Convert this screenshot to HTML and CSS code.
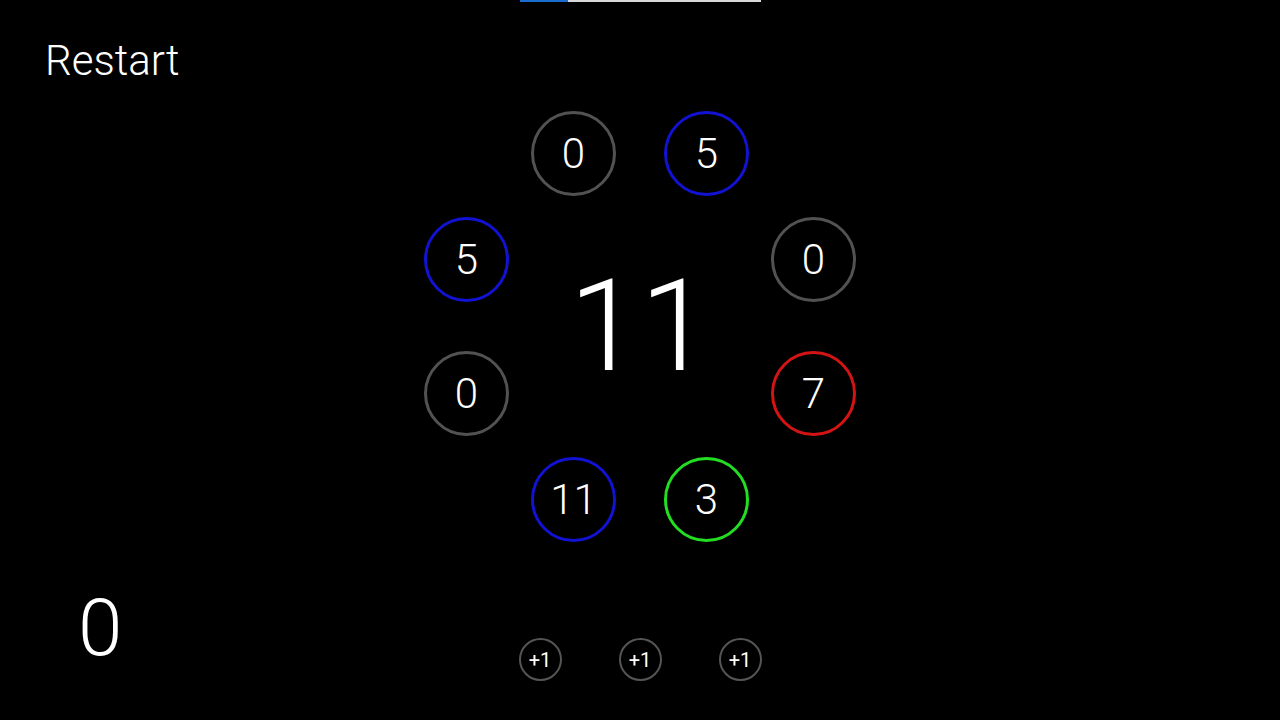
FILE: index.html
```html
<!DOCTYPE html>
<html lang="en">
<head>
<meta charset="utf-8">
<title>Counter ring</title>
<link rel="stylesheet" href="styles.css">
</head>
<body>
<div class="app">
  <header class="top">
    <div class="progress"><div class="progress-fill" style="width: 20%"></div></div>
    <div class="restart">Restart</div>
  </header>
  <main class="board">
    <div class="node n1 gray">0</div>
    <div class="node n2 blue">5</div>
    <div class="node n3 gray">0</div>
    <div class="node n4 red">7</div>
    <div class="node n5 green">3</div>
    <div class="node n6 blue">11</div>
    <div class="node n7 gray">0</div>
    <div class="node n8 blue">5</div>
    <div class="total">11</div>
  </main>
  <footer class="bottom">
    <div class="score">0</div>
    <div class="buttons">
      <div class="plus">+1</div>
      <div class="plus">+1</div>
      <div class="plus">+1</div>
    </div>
  </footer>
</div>
</body>
</html>
```
FILE: styles.css
```css
html, body {
  margin: 0;
  padding: 0;
  background: #000;
}
.app {
  width: 1280px;
  height: 720px;
  overflow: hidden;
  color: #fff;
  font-family: Roboto, "Liberation Sans", sans-serif;
  font-weight: 300;
}
.top {
  display: flex;
  flex-direction: column;
}
.progress {
  width: 241px;
  height: 2px;
  margin: 0 auto;
  background: #d8d8d8;
}
.progress-fill {
  height: 100%;
  background: #1a6dd0;
}
.restart {
  margin-top: 34px;
  padding-left: 45px;
  font-size: 42px;
  font-weight: 300;
  line-height: 49px;
}
.board {
  position: relative;
  width: 460px;
  height: 460px;
  margin: 11px auto 0;
}
.node {
  position: absolute;
  width: 85px;
  height: 85px;
  box-sizing: border-box;
  border: 3px solid #555;
  border-radius: 50%;
  display: flex;
  align-items: center;
  justify-content: center;
  font-size: 42px;
  line-height: 1;
}
.gray { border-color: #525252; }
.blue { border-color: #1212d2; }
.red { border-color: #d41414; }
.green { border-color: #22dd22; }
.n1 { left: 121px; top: 15px; }
.n2 { left: 254px; top: 15px; }
.n3 { left: 361px; top: 121px; }
.n4 { left: 361px; top: 255px; }
.n5 { left: 254px; top: 361px; }
.n6 { left: 121px; top: 361px; }
.n7 { left: 14px; top: 255px; }
.n8 { left: 14px; top: 121px; }
.total {
  position: absolute;
  left: 0;
  right: 0;
  top: 166px;
  text-align: center;
  font-size: 128px;
  line-height: 1;
}
.bottom {
  display: grid;
  grid-template-columns: 1fr auto 1fr;
}
.score {
  margin-top: 25px;
  padding-left: 78px;
  font-size: 80px;
  line-height: 94px;
  align-self: start;
}
.buttons {
  display: flex;
  gap: 57px;
  margin-top: 82px;
  align-self: start;
}
.plus {
  width: 43px;
  height: 43px;
  box-sizing: border-box;
  border: 2.5px solid #555;
  border-radius: 50%;
  display: flex;
  align-items: center;
  justify-content: center;
  font-size: 20px;
  font-weight: 400;
  line-height: 1;
}
```
